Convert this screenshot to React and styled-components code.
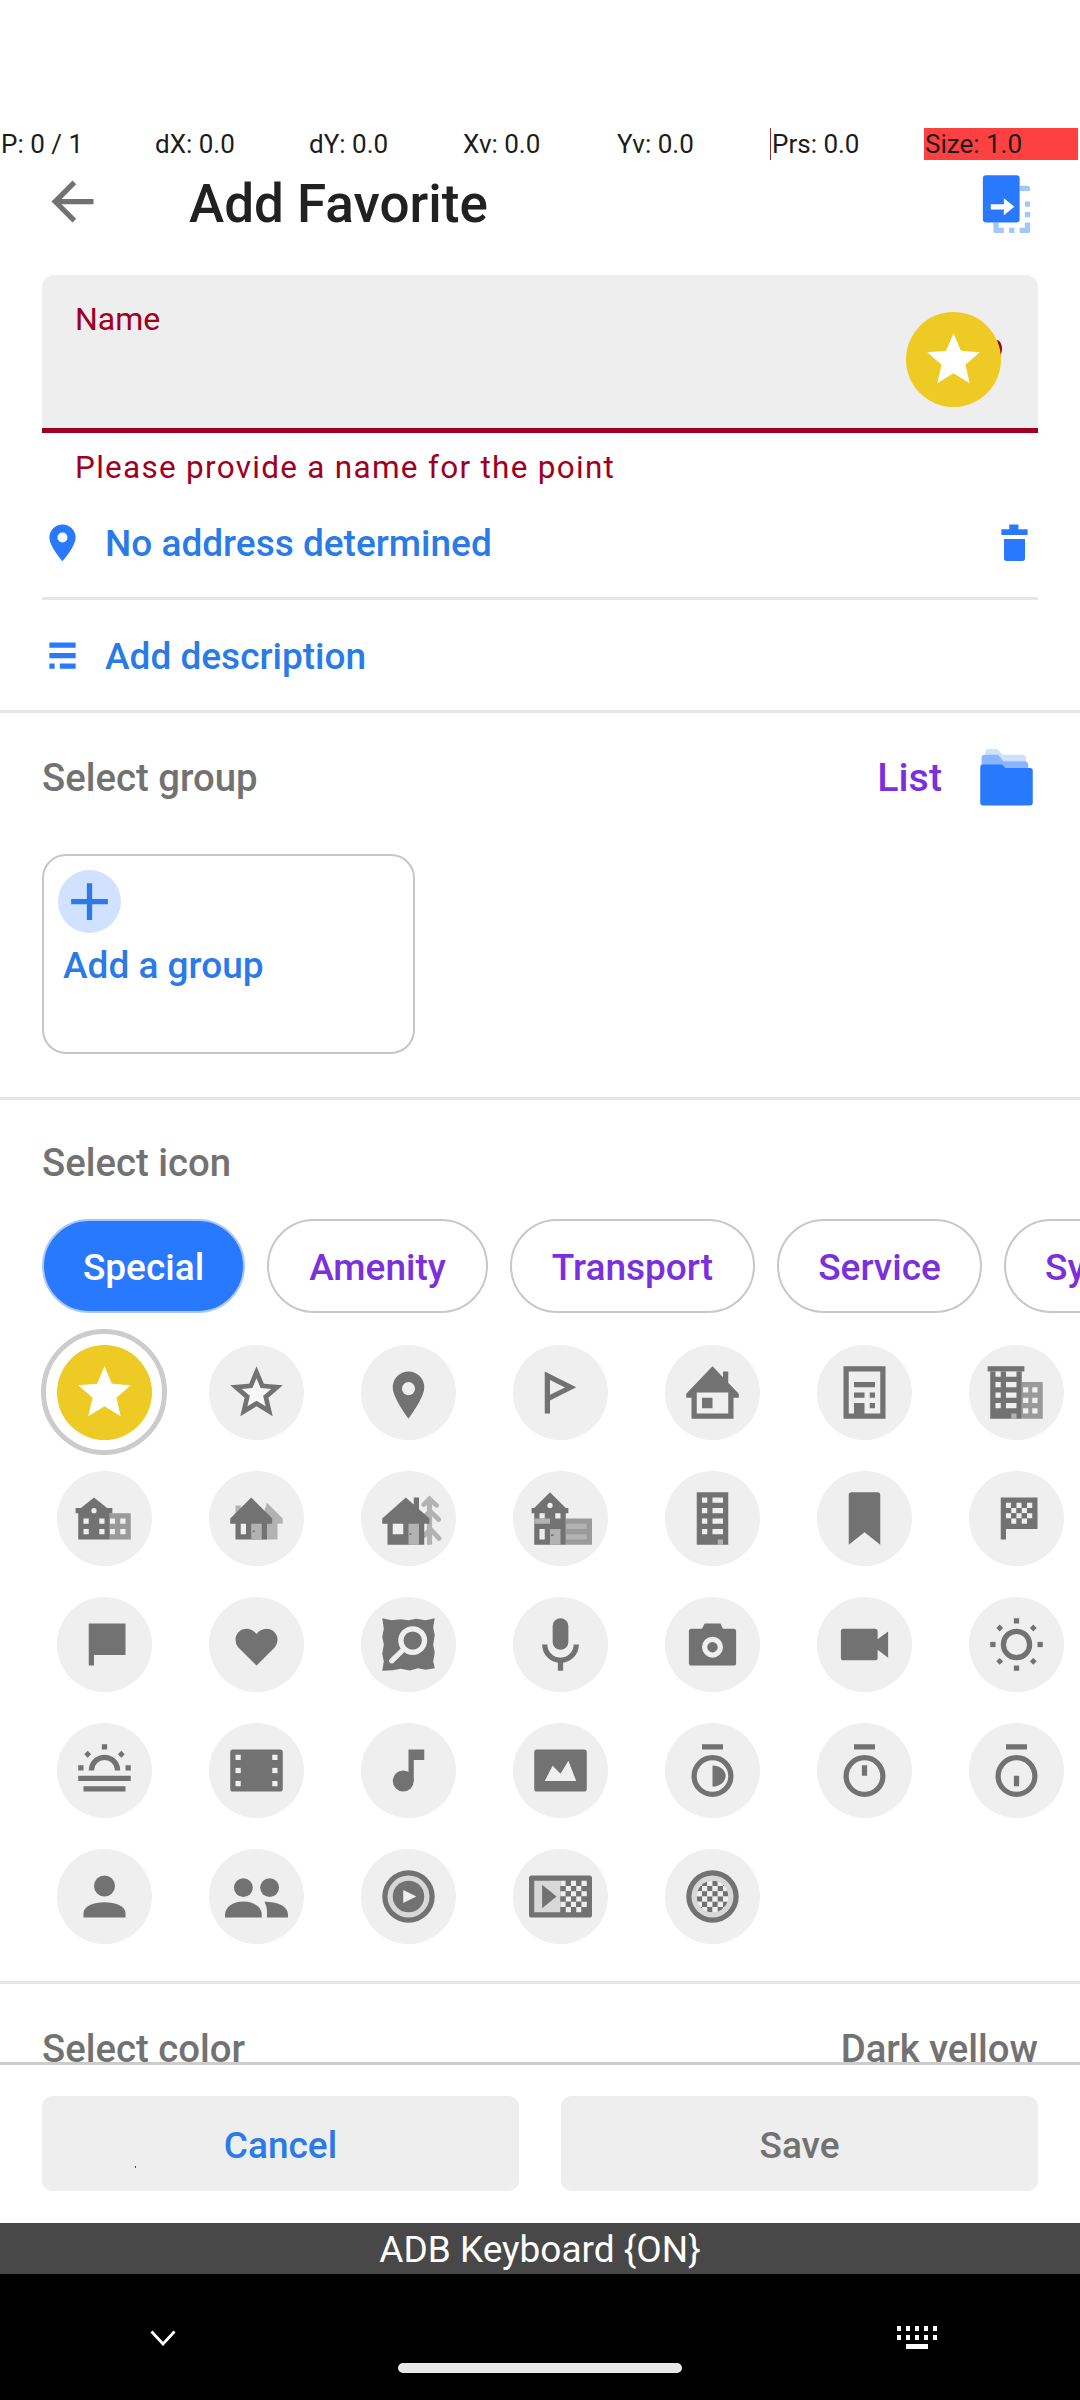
import React from 'react';
import styled, { createGlobalStyle } from 'styled-components';

const DARK = '#727272';
const MID = '#9a9a9a';
const LIGHT = '#b2b2b2';
const PALE = '#d8d8d8';
const DISC = '#efefef';
const BLUE = '#2979ff';
const LINK = '#2a7be8';
const PURPLE = '#7a31dc';
const ERROR = '#a00020';
const GOLD = '#eecb24';

const Global = createGlobalStyle`
  html, body { margin: 0; padding: 0; background: #fff; }
  * { box-sizing: border-box; }
  body { font-family: Roboto, "Liberation Sans", sans-serif; }
`;

const Page = styled.div`
  width: 1080px;
  height: 2400px;
  display: flex;
  flex-direction: column;
  overflow: hidden;
  background: #fff;
`;
const StatusGap = styled.div`height: 128px; flex: none;`;
const PointerRow = styled.div`
  width: 1078px;
  height: 32px;
  flex: none;
  display: grid;
  grid-template-columns: repeat(7, 1fr);
`;
const PointerCell = styled.div`
  font-size: 26px;
  line-height: 32px;
  color: #1c1c1c;
  white-space: nowrap;
  padding-left: ${p => (p.$first ? 1 : 1)}px;
  background: ${p => (p.$alert ? '#ff4040' : 'transparent')};
  border-left: ${p => (p.$mark ? '1px solid #8a3030' : 'none')};
`;
const Header = styled.header`
  height: 82px;
  flex: none;
  margin-bottom: 33px;
  display: flex;
  align-items: center;
  padding: 0 42px 0 41px;
`;
const HeaderIcon = styled.svg`width: 63px; height: 63px; flex: none; display: block;`;
const Title = styled.h1`
  margin: 0 0 0 85px;
  padding-top: 5px;
  flex: 1;
  font-size: 53px;
  font-weight: 500;
  color: #212121;
`;
const Scroll = styled.main`
  flex: 1;
  min-height: 0;
  overflow: hidden;
`;
const Field = styled.div`
  position: relative;
  height: 158px;
  margin: 0 42px;
  padding: 30px 33px 0;
  background: #eeeeee;
  border-radius: 12px 12px 0 0;
  border-bottom: 5px solid ${ERROR};
`;
const FieldLabel = styled.label`
  display: block;
  font-size: 32px;
  line-height: 28px;
  color: ${ERROR};
`;
const FieldBadge = styled.div`
  position: absolute;
  top: 37px;
  right: 37px;
  &::before {
    content: '';
    position: absolute;
    right: -1px;
    top: 28px;
    width: 10px;
    height: 18px;
    border-radius: 0 100% 100% 0;
    background: ${ERROR};
  }
`;
const Disc = styled.div`
  position: relative;
  width: 95px;
  height: 95px;
  border-radius: 50%;
  display: flex;
  align-items: center;
  justify-content: center;
  background: ${p => (p.$gold ? GOLD : DISC)};
`;
const Glyph = styled.svg`width: 63px; height: 63px; display: block; overflow: visible;`;
const ErrorText = styled.div`
  height: 67px;
  padding: 0 0 0 75px;
  font-size: 31.5px;
  letter-spacing: 1.28px;
  line-height: 69px;
  color: ${ERROR};
`;
const ActionRow = styled.div`
  display: flex;
  align-items: center;
  height: ${p => p.$h}px;
  margin: ${p => (p.$wide ? '0' : '0 42px')};
  padding: ${p => (p.$wide ? '0 42px' : '0')};
  padding-bottom: ${p => p.$pb}px;
  border-bottom: 3px solid #e6e6e6;
`;
const ActionIcon = styled.svg`
  width: 63px;
  height: 63px;
  flex: none;
  display: block;
  margin: 0 ${p => p.$mr || 0}px 0 ${p => p.$ml || 0}px;
`;
const ActionText = styled.span`
  flex: 1;
  padding-top: ${p => p.$pt ?? 4}px;
  font-size: 37px;
  font-weight: 500;
  color: ${LINK};
`;
const SectionHead = styled.div`
  display: flex;
  align-items: center;
  height: ${p => p.$h}px;
  padding: ${p => p.$pt || 0}px 42px 0;
  flex: none;
`;
const SectionTitle = styled.h2`
  margin: 0;
  flex: 1;
  padding-top: 2px;
  font-size: 38.3px;
  font-weight: 500;
  color: ${DARK};
`;
const SectionValue = styled.span`
  padding-top: 2px;
  font-size: 38.3px;
  font-weight: 500;
  color: ${DARK};
`;
const ListLink = styled.span`
  padding-top: 2px;
  font-size: 39.4px;
  font-weight: 500;
  color: ${PURPLE};
  margin-right: 33px;
`;
const CardSection = styled.div`
  padding: 15px 42px 43px;
  border-bottom: 3px solid #e6e6e6;
`;
const GroupCard = styled.div`
  width: 373px;
  height: 200px;
  padding: 14px;
  border: 2px solid #c6c6c6;
  border-radius: 24px;
`;
const PlusDisc = styled.div`
  width: 63px;
  height: 63px;
  border-radius: 50%;
  background: #d0e2ff;
  display: flex;
  align-items: center;
  justify-content: center;
`;
const PlusIcon = styled.svg`width: 63px; height: 63px; display: block;`;
const CardText = styled.div`
  margin: 11px 0 0 5px;
  font-size: 37px;
  font-weight: 500;
  color: ${LINK};
`;
const ChipRow = styled.div`
  display: flex;
  gap: 22px;
  padding-left: 42px;
  height: 94px;
  overflow: hidden;
`;
const Chip = styled.div`
  flex: none;
  height: 94px;
  width: ${p => p.$w}px;
  padding-left: ${p => (p.$cut ? 39 : 0)}px;
  text-align: ${p => (p.$cut ? 'left' : 'center')};
  border-radius: 47px;
  font-size: 37px;
  font-weight: 500;
  line-height: 93px;
  color: ${p => (p.$on ? '#fff' : PURPLE)};
  background: ${p => (p.$on ? BLUE : '#fff')};
  border: 2px solid ${p => (p.$on ? '#a9c8f5' : '#c8c8c8')};
`;
const IconGrid = styled.div`
  display: grid;
  grid-template-columns: repeat(7, 152px);
  grid-auto-rows: 126px;
  padding-left: 28px;
  margin: 16px 0 22px;
`;
const Cell = styled.div`
  display: flex;
  align-items: center;
  justify-content: center;
`;
const Ring = styled.div`
  width: 126px;
  height: 126px;
  border-radius: 50%;
  border: 5px solid #cccccc;
  display: flex;
  align-items: center;
  justify-content: center;
`;
const Divider = styled.div`height: 3px; background: #e6e6e6;`;
const Footer = styled.footer`
  flex: none;
  height: 161px;
  display: grid;
  grid-template-columns: 1fr 1fr;
  gap: 42px;
  padding: 31px 42px 32px;
  border-top: 3px solid #cccccc;
`;
const FootButton = styled.div`
  position: relative;
  padding-top: 5px;
  border-radius: 10px;
  background: #eeeeee;
  text-align: center;
  font-size: 37px;
  font-weight: 500;
  line-height: 90px;
  color: ${p => (p.$muted ? DARK : LINK)};
`;
const TouchDot = styled.i`
  position: absolute;
  left: 93px;
  top: 70px;
  width: 1px;
  height: 2px;
  background: #ff0000;
`;
const ImeBar = styled.div`
  flex: none;
  height: 51px;
  padding-top: 3px;
  background: #484848;
  color: #fff;
  text-align: center;
  font-size: 37px;
  line-height: 48px;
`;
const NavBar = styled.nav`
  flex: none;
  height: 126px;
  background: #000;
  display: grid;
  grid-template-columns: 1fr;
  justify-items: center;
  position: relative;
`;
const NavChevron = styled.svg`
  position: absolute;
  left: 150px;
  top: 56px;
  width: 26px;
  height: 16px;
`;
const NavKeys = styled.svg`
  position: absolute;
  left: 897px;
  top: 52px;
  width: 41px;
  height: 23px;
`;
const HomePill = styled.div`
  position: absolute;
  top: 89px;
  width: 284px;
  height: 10px;
  border-radius: 5px;
  background: #e8e8e8;
`;

const STAR = 'M12 17.27L18.18 21l-1.64-7.03L22 9.24l-7.19-.61L12 2 9.19 8.63 2 9.24l5.46 4.73L5.82 21z';

const G = ({ children, fill = DARK }) => (
  <Glyph viewBox="0 0 24 24" fill={fill}>{children}</Glyph>
);

const R = ({ x, y, w, h, f, rx }) => <rect x={x} y={y} width={w} height={h} fill={f} rx={rx} />;

const Checks = ({ x, y, cols, rows, a = DISC, b = DARK, s = 2, odd = 0 }) => {
  const out = [];
  for (let j = 0; j < rows; j++) {
    for (let i = 0; i < cols; i++) {
      out.push(<R key={`${i}-${j}`} x={x + i * s} y={y + j * s} w={s} h={s} f={(i + j + odd) % 2 === 0 ? a : b} />);
    }
  }
  return <>{out}</>;
};

const Squares = ({ xs, ys, w = 2, h = 2, f = DISC }) => (
  <>{ys.map(y => xs.map(x => <R key={`${x}-${y}`} x={x} y={y} w={w} h={h} f={f} />))}</>
);

const Timer = ({ children }) => (
  <G>
    <R x={8} y={2} w={8} h={2} />
    <circle cx="12" cy="14.1" r="7" fill="none" stroke={DARK} strokeWidth="2" />
    {children}
  </G>
);

const diamond = (x, y) => `M${x} ${y - 1.3}l1.3 1.3-1.3 1.3-1.3-1.3z`;

const ICONS = [
  <G key="star-o">
    <path d={STAR} />
    <path fill="#f8f8f8" transform="translate(12 12.4) scale(.56) translate(-12 -12.4)" d={STAR} />
  </G>,
  <G key="pin"><path d="M12 4a6 6 0 0 0-6 6.2C6 14 12 22 12 22s6-8 6-11.8A6 6 0 0 0 12 4z" /><circle cx="12" cy="10.5" r="2.5" fill={DISC} /></G>,
  <G key="flag-o"><path fillRule="evenodd" d="M6 4l12 6-10 5v5H6zM8 7.2v5.7l5.7-2.8z" /></G>,
  <G key="house"><path fillRule="evenodd" d="M12 2l4 4.2V4h2v4.3l4 4.2V14h-2v8H4v-8H2v-1.5zM6 12v8h12v-8z" /><R x={8} y={14} w={4} h={4} /></G>,
  <G key="office"><path fillRule="evenodd" d="M4 2h16v20H4zM6 4v16h2v-4h4v4h6V4z" /><R x={8} y={8} w={8} h={2} /><R x={8} y={12} w={4} h={2} /><R x={14} y={12} w={2} h={2} /><R x={14} y={16} w={2} h={2} /></G>,
  <G key="buildings">
    <R x={14} y={8} w={8} h={14} f={MID} />
    <Squares xs={[14.5, 18]} ys={[10, 14, 18]} f={DISC} />
    <R x={1} y={2} w={14} h={2} /><R x={2} y={4} w={12} h={18} />
    <Squares xs={[4]} ys={[4, 8, 12, 16]} /><Squares xs={[8]} ys={[4, 8, 12, 16]} w={4} />
    <R x={10} y={20} w={2} h={2} f={LIGHT} />
  </G>,
  <G key="school">
    <R x={14} y={10} w={8} h={10} f={MID} />
    <Squares xs={[14, 18]} ys={[12, 16]} />
    <path d="M8 4l5 4h2v2h-1v10H2V10H1V8h2z" />
    <circle cx="8" cy="9" r="1" fill={DISC} />
    <Squares xs={[4, 10]} ys={[12, 16]} />
  </G>,
  <G key="houses">
    <path fill={LIGHT} d="M4 7h2v3H4zM16 6l6 6v2h-2v6h-6v-8z" />
    <path d="M10 4l8 8v2h-2v6H4v-6H2v-2z" />
    <R x={6} y={14} w={2} h={4} f={DISC} />
    <R x={10} y={14} w={4} h={6} f={LIGHT} />
    <R x={10.6} y={16.6} w={.8} h={.6} />
  </G>,
  <G key="cabin">
    <R x={19} y={5} w={2} h={17} f={LIGHT} />
    <g stroke={LIGHT} strokeWidth="1.8" strokeLinecap="round" fill="none">
      <path d="M17.8 6.700L20 4.500l2.700 2.500M18 11.500l2.200-2.300 3.300 3.200M18 18.500l2.300-2.500 3.300 3.600" />
    </g>
    <path d="M11 4l3 2.700V4h2v4.500l4 3.500v2h-2v8H4v-8H2v-2z" />
    <R x={6} y={14} w={4} h={4} f={DISC} />
    <R x={12} y={14} w={4} h={8} f={LIGHT} />
    <R x={12.4} y={17.6} w={.7} h={.7} />
  </G>,
  <G key="townhall">
    <R x={14} y={12} w={10} h={10} f={MID} />
    <R x={14} y={14} w={8} h={2} f={LIGHT} /><R x={14} y={18} w={8} h={2} f={LIGHT} />
    <path d="M8 2l6 6h1v2h-1v12H2V10H1V8h1z" />
    <circle cx="8" cy="7" r="1" fill={DISC} />
    <Squares xs={[4, 10]} ys={[10]} />
    <R x={2} y={12} w={6} h={2} f={LIGHT} />
    <R x={4} y={16} w={2} h={4} f={DISC} />
    <R x={8} y={16} w={4} h={6} f={LIGHT} />
    <R x={8.4} y={18} w={1} h={.7} />
  </G>,
  <G key="tower">
    <R x={6} y={2} w={12} h={20} />
    <Squares xs={[8]} ys={[4, 8, 12, 16]} /><Squares xs={[12]} ys={[4, 8, 12, 16]} w={4} />
    <R x={14} y={20} w={2} h={2} f={LIGHT} />
  </G>,
  <G key="bookmark"><path d="M7 2h10a1 1 0 0 1 1 1v19l-6-4.8L6 22V3a1 1 0 0 1 1-1z" /></G>,
  <G key="check-flag"><path d="M6 4h14v12H8v4H6z" /><Checks x={8} y={6} cols={5} rows={4} /></G>,
  <G key="flag"><path d="M6 4h14v12H8v4H6z" /></G>,
  <G key="heart"><path d="M12 20l-7-7A4.3 4.3 0 0 1 4 10.2 4.2 4.2 0 0 1 8.2 6c1.5 0 2.9.8 3.8 2 .9-1.2 2.3-2 3.8-2A4.2 4.2 0 0 1 20 10.2c0 1.1-.4 2.1-1 2.8z" /></G>,
  <G key="mapsearch">
    <path d="M2 2l3.500.8L9 2.400l3 .4 3-.6 3.500.6L22 2l-.6 3.500.6 3-.6 3.500.6 3-.6 3.500.6 2.500-3.500.6-3-.6-3 .9-3.500-.7-3 .6L2 22l.6-3.500-.6-3 .6-3.500-.6-3 .6-3z" />
    <g fill="none" stroke={DISC} strokeWidth="2"><circle cx="13.6" cy="10.5" r="4.5" /><path strokeLinecap="round" d="M10.2 13.8L5.6 18.2" /></g>
  </G>,
  <G key="mic">
    <R x={9} y={2} w={6} h={12} rx={3} />
    <path fill="none" stroke={DARK} strokeWidth="2" d="M6 12a6 6 0 0 0 12 0" />
    <R x={11} y={18} w={2} h={4} />
  </G>,
  <G key="camera">
    <path d="M4 6h4l1-2h6l1 2h4a1 1 0 0 1 1 1v12a1 1 0 0 1-1 1H4a1 1 0 0 1-1-1V7a1 1 0 0 1 1-1z" />
    <circle cx="12" cy="13" r="3" fill="none" stroke={DISC} strokeWidth="2" />
  </G>,
  <G key="video"><path d="M4 6h12a1 1 0 0 1 1 1v3l4-3v10l-4-3v3a1 1 0 0 1-1 1H4a1 1 0 0 1-1-1V7a1 1 0 0 1 1-1z" /></G>,
  <G key="sun">
    <circle cx="12" cy="12" r="5" fill="none" stroke={DARK} strokeWidth="2" />
    <R x={11} y={2} w={2} h={2} /><R x={11} y={20} w={2} h={2} /><R x={2} y={11} w={2} h={2} /><R x={20} y={11} w={2} h={2} />
    <path d={`${diamond(5.6, 5.7)}${diamond(18.4, 5.7)}${diamond(5.6, 18.4)}${diamond(18.4, 18.4)}`} />
  </G>,
  <G key="sunrise">
    <R x={11} y={2} w={2} h={2} /><R x={2} y={10} w={2} h={2} /><R x={20} y={10} w={2} h={2} />
    <path d={`${diamond(5.6, 5.8)}${diamond(18.4, 5.8)}`} />
    <path fill="none" stroke={DARK} strokeWidth="2" d="M7 12a5 5 0 0 1 10 0" />
    <R x={2} y={14} w={20} h={2} /><R x={4} y={18} w={16} h={2} />
  </G>,
  <G key="film">
    <R x={2} y={4} w={20} h={16} rx={1} />
    <Squares xs={[4, 18]} ys={[6, 11, 16]} />
  </G>,
  <G key="music">
    <circle cx="10" cy="16" r="4" />
    <path d="M12 4h6v4h-4v8h-2z" />
  </G>,
  <G key="photo">
    <R x={2} y={4} w={20} h={16} rx={1} />
    <path fill={DISC} d="M6 16l3-5.800 3 3 3-4.900 3 7.700z" />
  </G>,
  <Timer key="t1"><path d="M12 10.100a5 4 0 0 1 0 8z" /></Timer>,
  <Timer key="t2"><R x={11} y={10} w={2} h={4} /></Timer>,
  <Timer key="t3"><R x={11} y={14} w={2} h={4} /></Timer>,
  <G key="person"><circle cx="12" cy="8" r="4" /><path d="M4 20v-1.700C4 15.700 8 14.200 12 14.200s8 1.500 8 4.100V20z" /></G>,
  <G key="people">
    <circle cx="7" cy="8.600" r="3.600" /><circle cx="17" cy="8.600" r="3.600" />
    <path d="M0 20v-1c0-3.300 3.500-5.100 7-5.100s7 1.800 7 5.100v1z" />
    <path d="M15 14c5 0 9 1.600 9 5v1h-8v-2c0-1.500-.4-3-1-4z" />
  </G>,
  <G key="play">
    <circle cx="12" cy="12" r="10" /><circle cx="12" cy="12" r="8" fill={PALE} /><circle cx="12" cy="12" r="6" />
    <path fill={DISC} d="M10 9.500l5 2.500-5 2.500z" />
  </G>,
  <G key="strip">
    <R x={0} y={4} w={24} h={16} rx={1} />
    <R x={2} y={6} w={10} h={12} f={PALE} />
    <path d="M5 7.500l5.500 4.500L5 16.500z" />
    <Checks x={12} y={6} cols={5} rows={6} />
  </G>,
  <G key="check-disc">
    <defs><clipPath id="chk"><circle cx="12" cy="12" r="6" /></clipPath></defs>
    <circle cx="12" cy="12" r="10" /><circle cx="12" cy="12" r="8" fill={PALE} />
    <g clipPath="url(#chk)"><Checks x={6} y={6} cols={6} rows={6} /></g>
  </G>,
];

const WhiteStar = () => <G fill="#fff"><path d={STAR} /></G>;

const POINTER = ['P: 0 / 1', 'dX: 0.0', 'dY: 0.0', 'Xv: 0.0', 'Yv: 0.0', 'Prs: 0.0', 'Size: 1.0'];
const CHIPS = [
  { t: 'Special', w: 203, on: true },
  { t: 'Amenity', w: 221 },
  { t: 'Transport', w: 245 },
  { t: 'Service', w: 205 },
  { t: 'System', w: 220, cut: true },
];

export default function App() {
  return (
    <>
      <Global />
      <Page>
        <StatusGap />
        <PointerRow>
          {POINTER.map((t, i) => (
            <PointerCell key={t} $first={i === 0} $mark={i === 5} $alert={i === 6}>{t}</PointerCell>
          ))}
        </PointerRow>
        <Header>
          <HeaderIcon viewBox="0 0 24 24" fill={DARK}>
            <path d="M20 11H7.83l5.59-5.59L12 4l-8 8 8 8 1.41-1.41L7.83 13H20v-2z" />
          </HeaderIcon>
          <Title>Add Favorite</Title>
          <HeaderIcon viewBox="0 0 24 24">
            <g fill="#a3c6fb">
              <path d="M17 6h3a1 1 0 0 1 1 1v1h-2V8h-2zM19 12h2v2h-2zM19 16h2v2h-2zM19 20h2v3a1 1 0 0 1-1 1h-3v-2h2zM13 22h2v2h-2zM7 20h2v2h2v2H8a1 1 0 0 1-1-1z" />
            </g>
            <R x={3} y={2} w={14} h={18} rx={1.2} f={BLUE} />
            <path fill="#fff" d="M6 13h5v-2.200l4 3.200-4 3.200V15H6z" />
          </HeaderIcon>
        </Header>
        <Scroll>
          <Field>
            <FieldLabel>Name</FieldLabel>
            <FieldBadge>
              <Disc $gold><WhiteStar /></Disc>
            </FieldBadge>
          </Field>
          <ErrorText>Please provide a name for the point</ErrorText>
          <ActionRow $h={100} $pb={15}>
            <ActionIcon viewBox="0 0 24 24" fill={BLUE} $ml={-11} $mr={11}>
              <path fillRule="evenodd" d="M12 5.500a5 5 0 0 0-5 5c0 3.400 5 9 5 9s5-5.600 5-9a5 5 0 0 0-5-5zm0 3.100a1.900 1.900 0 1 1 0 3.800 1.900 1.900 0 0 1 0-3.800z" />
            </ActionIcon>
            <ActionText>No address determined</ActionText>
            <ActionIcon viewBox="0 0 24 24" fill={BLUE} $mr={-8}>
              <path d="M10 5.500h3.500v1.800H17v2.200H7V7.300h3zM8 11h8v7.400a1 1 0 0 1-1 1H9a1 1 0 0 1-1-1z" />
            </ActionIcon>
          </ActionRow>
          <ActionRow $h={113} $wide>
            <ActionIcon viewBox="0 0 24 24" fill={BLUE} $ml={-11} $mr={11}>
              <path d="M7 7h10v2H7zM7 11h10v2H7zM7 15h2v2H7zM11 15h6v2h-6z" />
            </ActionIcon>
            <ActionText $pt={2}>Add description</ActionText>
          </ActionRow>
          <SectionHead $h={126}>
            <SectionTitle>Select group</SectionTitle>
            <ListLink>List</ListLink>
            <HeaderIcon viewBox="0 0 24 24">
              <path fill="#cfe1ff" d="M4 2.500a1 1 0 0 1 1-1h3.500l2 2.200H18a1.500 1.500 0 0 1 1.500 1.500V8H4z" />
              <path fill="#8ab6ff" d="M2.500 5a1.300 1.300 0 0 1 1.300-1.300h5l2 2.500h8a1.500 1.500 0 0 1 1.500 1.500V10H2.500z" />
              <path fill={BLUE} d="M2 8.400a1 1 0 0 1 1-1h7.300l1.300 1.400H21a1 1 0 0 1 1 1V22a1 1 0 0 1-1 1H3a1 1 0 0 1-1-1z" />
            </HeaderIcon>
          </SectionHead>
          <CardSection>
            <GroupCard>
              <PlusDisc>
                <PlusIcon viewBox="0 0 24 24" fill={LINK}>
                  <path d="M11 5h2v6h6v2h-6v6h-2v-6H5v-2h6z" />
                </PlusIcon>
              </PlusDisc>
              <CardText>Add a group</CardText>
            </GroupCard>
          </CardSection>
          <SectionHead $h={119} $pt={4}>
            <SectionTitle>Select icon</SectionTitle>
          </SectionHead>
          <ChipRow>
            {CHIPS.map(c => (
              <Chip key={c.t} $w={c.w} $on={c.on} $cut={c.cut}>{c.t}</Chip>
            ))}
          </ChipRow>
          <IconGrid>
            <Cell>
              <Ring><Disc $gold><WhiteStar /></Disc></Ring>
            </Cell>
            {ICONS.map(icon => (
              <Cell key={icon.key}><Disc>{icon}</Disc></Cell>
            ))}
          </IconGrid>
          <Divider />
          <SectionHead $h={126}>
            <SectionTitle>Select color</SectionTitle>
            <SectionValue>Dark yellow</SectionValue>
          </SectionHead>
        </Scroll>
        <Footer>
          <FootButton>Cancel<TouchDot /></FootButton>
          <FootButton $muted>Save</FootButton>
        </Footer>
        <ImeBar>ADB Keyboard {'{ON}'}</ImeBar>
        <NavBar>
          <NavChevron viewBox="0 0 26 16">
            <path d="M1.500 1.500L13 14 24.500 1.500" fill="none" stroke="#fff" strokeWidth="2.800" />
          </NavChevron>
          <NavKeys viewBox="0 0 41 23" fill="#fff">
            {[0, 9].map(y => [0, 9, 18, 27, 36].map(x => <rect key={`${x}-${y}`} x={x} y={y} width="4" height="5" />))}
            <rect x="9" y="18" width="22" height="5" />
          </NavKeys>
          <HomePill />
        </NavBar>
      </Page>
    </>
  );
}
